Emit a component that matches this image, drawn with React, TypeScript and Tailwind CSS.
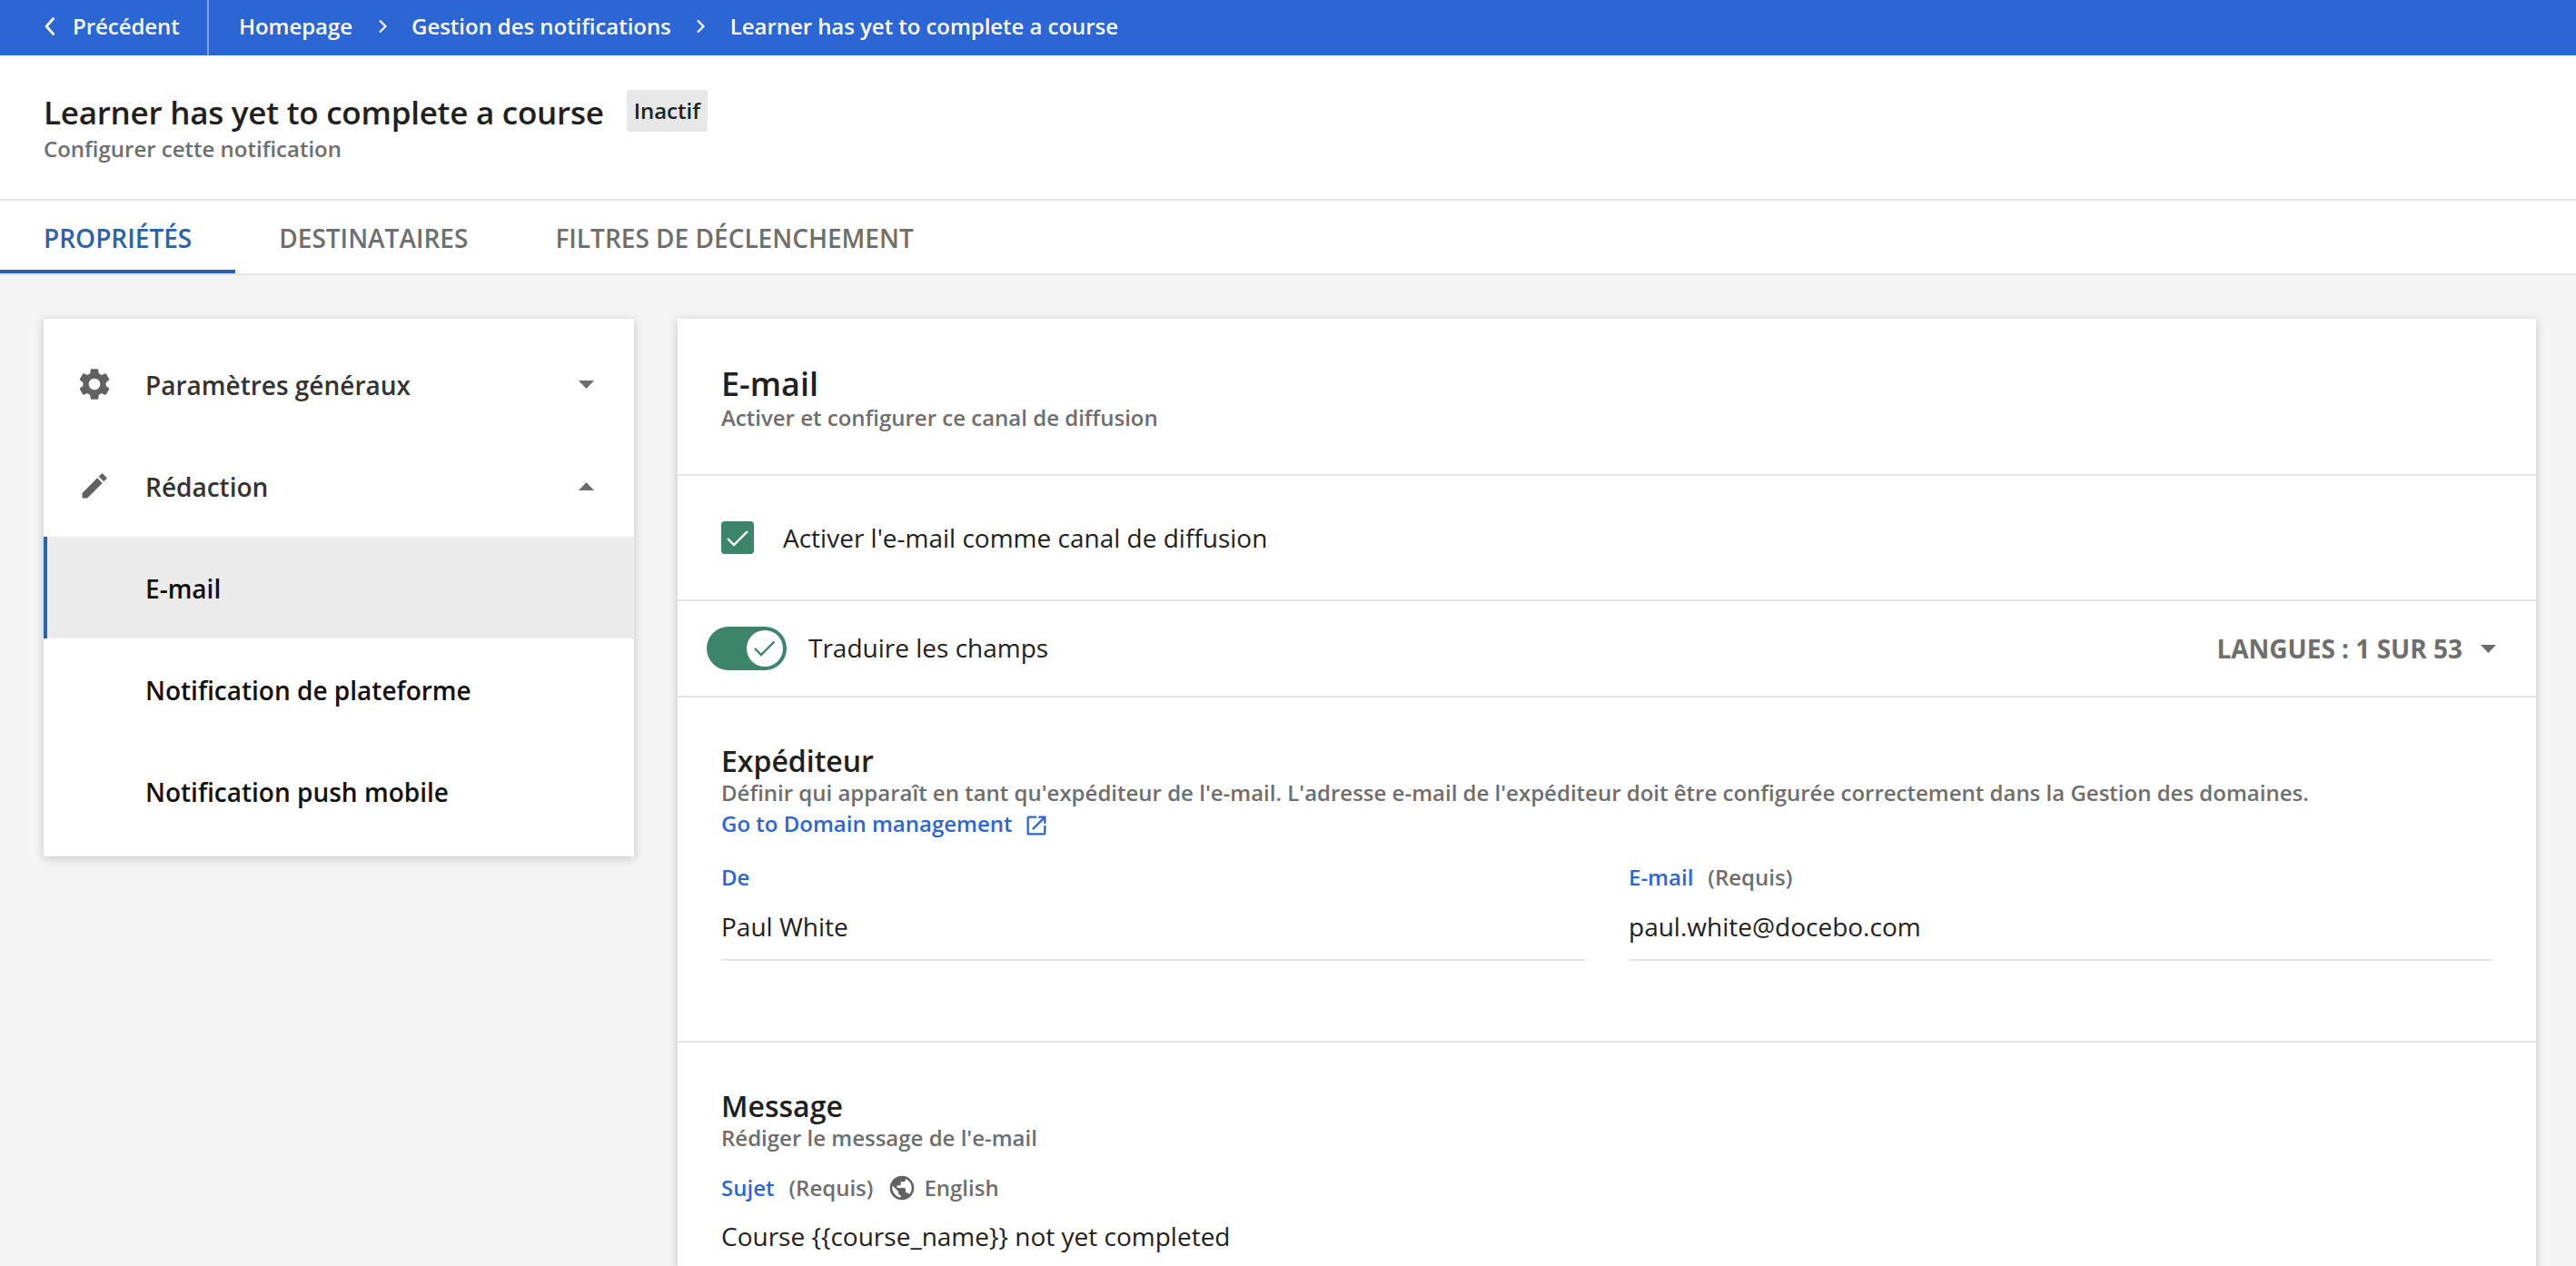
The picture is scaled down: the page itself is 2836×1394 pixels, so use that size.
import React from 'react';

const Caret = ({ up = false }: { up?: boolean }) => (
  <svg viewBox="0 0 17 9" className="w-[17px] h-[9px] fill-[#6b6b6b]">
    <polygon points={up ? '0,9 8.5,0 17,9' : '0,0 17,0 8.5,9'} />
  </svg>
);

const Chevron = () => (
  <svg viewBox="0 0 10 16" className="w-[10px] h-[16px] fill-none stroke-white stroke-[2.2]">
    <path d="M2 1.5 8.5 8 2 14.5" />
  </svg>
);

const NavIcon = ({ d, box }: { d: string; box: string }) => (
  <span className="w-[40px] h-[40px] flex items-center justify-center">
    <svg viewBox="0 0 24 24" className={`${box} shrink-0 fill-[#616161]`}>
      <path d={d} />
    </svg>
  </span>
);

const GEAR =
  'M19.14 12.94c.04-.3.06-.61.06-.94 0-.32-.02-.64-.07-.94l2.03-1.58c.18-.14.23-.41.12-.61l-1.92-3.32c-.12-.22-.37-.29-.59-.22l-2.39.96c-.5-.38-1.03-.7-1.62-.94l-.36-2.54c-.04-.24-.24-.41-.48-.41h-3.84c-.24 0-.43.17-.47.41l-.36 2.54c-.59.24-1.13.57-1.62.94l-2.39-.96c-.22-.08-.47 0-.59.22L2.74 8.87c-.12.21-.08.47.12.61l2.03 1.58c-.05.3-.09.63-.09.94s.02.64.07.94l-2.03 1.58c-.18.14-.23.41-.12.61l1.92 3.32c.12.22.37.29.59.22l2.39-.96c.5.38 1.03.7 1.62.94l.36 2.54c.05.24.24.41.48.41h3.84c.24 0 .44-.17.47-.41l.36-2.54c.59-.24 1.13-.56 1.62-.94l2.39.96c.22.08.47 0 .59-.22l1.92-3.32c.12-.22.07-.47-.12-.61l-2.01-1.58zM12 15.6c-1.98 0-3.6-1.62-3.6-3.6s1.62-3.6 3.6-3.6 3.6 1.62 3.6 3.6-1.62 3.6-3.6 3.6z';
const PENCIL =
  'M3 17.25V21h3.75L17.81 9.94l-3.75-3.75L3 17.25zM20.71 7.04c.39-.39.39-1.02 0-1.41l-2.34-2.34c-.39-.39-1.02-.39-1.41 0l-1.83 1.83 3.75 3.75 1.83-1.83z';

export default function App() {
  return (
    <div className="h-screen overflow-hidden bg-[#f4f4f4] font-['Open_Sans',sans-serif]">
      <div className="h-[61px] bg-[#2c66d4] flex items-stretch text-white text-[24px] font-semibold tracking-[-0.05px]">
        <div className="w-[230px] pl-[48px] pb-[3px] flex items-center gap-[18px] border-r-2 border-white/40">
          <svg viewBox="0 0 12 20" className="w-[14px] h-[22px] fill-none stroke-white stroke-[2.6]">
            <path d="M10 1.5 2.5 10 10 18.5" />
          </svg>
          <span>Précédent</span>
        </div>
        <div className="pl-[33px] pb-[3px] flex items-center gap-[27.5px]">
          <span>Homepage</span>
          <Chevron />
          <span>Gestion des notifications</span>
          <Chevron />
          <span>Learner has yet to complete a course</span>
        </div>
      </div>

      <div className="h-[160px] bg-white border-b-2 border-[#e4e4e4] pl-[48px] pt-[38px]">
        <div className="flex items-start">
          <h1 className="text-[35px] font-semibold tracking-[-0.25px] leading-[50px] text-[#1f2120]">
            Learner has yet to complete a course
          </h1>
          <span className="ml-[25px] h-[46px] px-[8px] rounded-[3px] bg-[#e6e7e6] text-[24px] font-semibold leading-[46px] text-[#1f2120]">
            Inactif
          </span>
        </div>
        <p className="text-[24px] font-semibold leading-[32px] text-[#6e6e6e] -mt-[1px]">Configurer cette notification</p>
      </div>

      <div className="h-[82px] bg-white border-b-2 border-[#e4e4e4] flex text-[28px] font-semibold text-[#6e6e6e]">
        <div className="px-[48px] h-[80px] leading-[82px] text-[#2a62ae] border-b-4 border-[#2a62ae]">PROPRIÉTÉS</div>
        <div className="px-[48px] leading-[82px]">DESTINATAIRES</div>
        <div className="px-[48px] leading-[82px]">FILTRES DE DÉCLENCHEMENT</div>
      </div>

      <div className="flex items-start gap-[48px] pl-[48px] pt-[48px]">
        <aside className="w-[650px] shrink-0 bg-white py-[16px] shadow-[0_2px_10px_rgba(0,0,0,0.2)] text-[28px] font-semibold">
          <div className="h-[112px] pl-[36px] pr-[44px] flex items-center text-[#333333]">
            <NavIcon d={GEAR} box="w-[42px] h-[42px]" />
            <span className="ml-[36px] pt-[2px] flex-1">Paramètres généraux</span>
            <Caret />
          </div>
          <div className="h-[112px] pl-[36px] pr-[44px] flex items-center text-[#333333]">
            <NavIcon d={PENCIL} box="w-[36px] h-[36px]" />
            <span className="ml-[36px] pt-[2px] flex-1">Rédaction</span>
            <Caret up />
          </div>
          <div className="h-[112px] pl-[108px] pt-[2px] flex items-center text-[#111111] bg-[#ebebeb] border-l-4 border-[#2a62ae]">
            E-mail
          </div>
          <div className="h-[112px] pl-[112px] pt-[2px] flex items-center text-[#111111]">
            Notification de plateforme
          </div>
          <div className="h-[112px] pl-[112px] pt-[2px] flex items-center text-[#111111]">
            Notification push mobile
          </div>
        </aside>

        <main className="w-[2046px] shrink-0 bg-white shadow-[0_2px_10px_rgba(0,0,0,0.2)]">
          <section className="h-[173px] px-[48px] pt-[50px] border-b-2 border-[#e4e4e4]">
            <h2 className="text-[36px] font-semibold leading-[44px] text-[#1f2120]">E-mail</h2>
            <p className="text-[24px] font-semibold leading-[30px] text-[#6e6e6e]">Activer et configurer ce canal de diffusion</p>
          </section>

          <section className="h-[138px] px-[48px] flex items-center border-b-2 border-[#e4e4e4]">
            <span className="w-[36px] h-[36px] rounded-[4px] bg-[#3c846a]">
              <svg viewBox="0 0 36 36" className="w-[36px] h-[36px] fill-none stroke-white stroke-[2.4]">
                <path d="M7 19 14 26 29 11" />
              </svg>
            </span>
            <span className="ml-[32px] text-[28px] text-[#1f2120]">Activer l'e-mail comme canal de diffusion</span>
          </section>

          <section className="h-[106px] pl-[32px] pr-[44px] flex items-center border-b-2 border-[#e4e4e4]">
            <span className="w-[88px] h-[48px] rounded-full bg-[#3c846a] flex items-center justify-end pr-[4px]">
              <span className="w-[40px] h-[40px] rounded-full bg-white">
                <svg viewBox="0 0 40 40" className="w-[40px] h-[40px] fill-none stroke-[#3c846a] stroke-[2.4]">
                  <path d="M9 20 16 27 30.5 12.5" />
                </svg>
              </span>
            </span>
            <span className="ml-[24px] pb-[3px] flex-1 text-[28px] text-[#1f2120]">Traduire les champs</span>
            <span className="text-[28px] font-bold text-[#6e6e6e]">LANGUES : 1 SUR 53</span>
            <span className="ml-[20px]">
              <Caret />
            </span>
          </section>

          <section className="h-[380px] px-[48px] pt-[49px] border-b-2 border-[#e4e4e4]">
            <h3 className="text-[32px] font-semibold leading-[41px] text-[#1f2120]">Expéditeur</h3>
            <p className="text-[24px] font-semibold leading-[30px] text-[#6e6e6e]">
              Définir qui apparaît en tant qu'expéditeur de l'e-mail. L'adresse e-mail de l'expéditeur doit être configurée correctement dans la Gestion des domaines.
            </p>
            <a className="mt-[3px] flex items-center text-[24px] font-semibold leading-[32px] text-[#2c66d4]">
              Go to Domain management
              <svg viewBox="0 0 24 24" className="ml-[13px] mt-[3px] w-[28px] h-[28px] fill-[#2c66d4]">
                <path d="M19 19H5V5h7V3H5c-1.11 0-2 .9-2 2v14c0 1.1.89 2 2 2h14c1.1 0 2-.9 2-2v-7h-2v7zM14 3v2h3.59l-9.83 9.83 1.41 1.41L19 6.41V10h2V3h-7z" />
              </svg>
            </a>
            <div className="mt-[27px] grid grid-cols-2 gap-[48px]">
              <div>
                <div className="text-[24px] font-semibold leading-[32px] text-[#2c66d4]">De</div>
                <div className="mt-[19px] pb-[17px] text-[28px] leading-[38px] text-[#1f2120] border-b-2 border-[#e4e4e4]">Paul White</div>
              </div>
              <div>
                <div className="text-[24px] leading-[32px] text-[#6e6e6e] font-semibold">
                  <span className="text-[#2c66d4]">E-mail</span>
                  <span className="ml-[16px]">(Requis)</span>
                </div>
                <div className="mt-[19px] pb-[17px] text-[28px] leading-[38px] text-[#1f2120] border-b-2 border-[#e4e4e4]">paul.white@docebo.com</div>
              </div>
            </div>
          </section>

          <section className="px-[48px] pt-[49px]">
            <h3 className="text-[32px] font-semibold leading-[41px] text-[#1f2120]">Message</h3>
            <p className="text-[24px] font-semibold leading-[30px] text-[#6e6e6e]">Rédiger le message de l'e-mail</p>
            <div className="mt-[24px] flex items-center text-[24px] font-semibold leading-[32px] text-[#6e6e6e]">
              <span className="text-[#2c66d4]">Sujet</span>
              <span className="ml-[16px]">(Requis)</span>
              <svg viewBox="0 0 24 24" className="ml-[16px] w-[32px] h-[32px] fill-[#616161]">
                <path d="M12 2C6.48 2 2 6.48 2 12s4.48 10 10 10 10-4.48 10-10S17.52 2 12 2zm-1 17.93c-3.95-.49-7-3.85-7-7.93 0-.62.08-1.21.21-1.79L9 15v1c0 1.1.9 2 2 2v1.93zm6.9-2.54c-.26-.81-1-1.39-1.9-1.39h-1v-3c0-.55-.45-1-1-1H8v-2h2c.55 0 1-.45 1-1V7h2c1.1 0 2-.9 2-2v-.41c2.93 1.19 5 4.06 5 7.41 0 2.08-.8 3.97-2.1 5.39z" />
              </svg>
              <span className="ml-[8px]">English</span>
            </div>
            <div className="mt-[18px] pb-[20px] text-[28px] leading-[38px] text-[#1f2120]">Course {'{{course_name}}'} not yet completed</div>
          </section>
        </main>
      </div>
    </div>
  );
}
